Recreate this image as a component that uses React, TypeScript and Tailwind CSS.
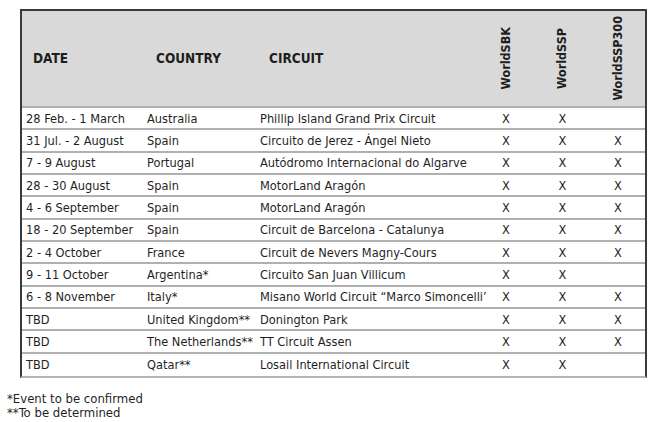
const rows: [string, string, string, boolean, boolean, boolean][] = [
  ['28 Feb. - 1 March', 'Australia', 'Phillip Island Grand Prix Circuit', true, true, false],
  ['31 Jul. - 2 August', 'Spain', 'Circuito de Jerez - Ángel Nieto', true, true, true],
  ['7 - 9 August', 'Portugal', 'Autódromo Internacional do Algarve', true, true, true],
  ['28 - 30 August', 'Spain', 'MotorLand Aragón', true, true, true],
  ['4 - 6 September', 'Spain', 'MotorLand Aragón', true, true, true],
  ['18 - 20 September', 'Spain', 'Circuit de Barcelona - Catalunya', true, true, true],
  ['2 - 4 October', 'France', 'Circuit de Nevers Magny-Cours', true, true, true],
  ['9 - 11 October', 'Argentina*', 'Circuito San Juan Villicum', true, true, false],
  ['6 - 8 November', 'Italy*', 'Misano World Circuit “Marco Simoncelli’', true, true, true],
  ['TBD', 'United Kingdom**', 'Donington Park', true, true, true],
  ['TBD', 'The Netherlands**', 'TT Circuit Assen', true, true, true],
  ['TBD', 'Qatar**', 'Losail International Circuit', true, true, false],
];

const cols = 'grid grid-cols-[121px_113px_222px_56px_57px_54px]';

function VHead({ label }: { label: string }) {
  return (
    <div className="flex items-center justify-center">
      <span className="[writing-mode:vertical-rl] rotate-180 text-[12.5px] font-bold text-[#1e1e1e]">{label}</span>
    </div>
  );
}

export default function App() {
  return (
    <div className="w-[649px] h-[422px] bg-white text-[#1f1f1f] font-['DejaVu_Sans_Condensed','DejaVu_Sans',sans-serif] overflow-hidden">
      <div className="ml-[20px] mt-[9px] w-[627px] border-t-2 border-l-2 border-r-2 border-[#3a3a3a] border-b-2 border-b-[#b4b4b4]">
        <div className={`${cols} h-[97px] bg-[#d9d9d9] border-b-2 border-[#b0b0b0] text-[13.5px] font-bold text-[#1e1e1e]`}>
          <div className="flex items-center pl-[11px]">DATE</div>
          <div className="flex items-center pl-[13px]">COUNTRY</div>
          <div className="flex items-center pl-[13px]">CIRCUIT</div>
          <VHead label="WorldSBK" />
          <VHead label="WorldSSP" />
          <VHead label="WorldSSP300" />
        </div>
        {rows.map((r, i) => (
          <div
            key={i}
            className={`${cols} h-[22.33px] text-[12.7px] ${i < rows.length - 1 ? 'border-b-2 border-[#b0b0b0]' : ''}`}
          >
            <div className="flex items-center pl-[4px] whitespace-nowrap">{r[0]}</div>
            <div className="flex items-center pl-[4px] whitespace-nowrap">{r[1]}</div>
            <div className="flex items-center pl-[4px] whitespace-nowrap">{r[2]}</div>
            <div className="flex items-center justify-center">{r[3] ? 'X' : ''}</div>
            <div className="flex items-center justify-center">{r[4] ? 'X' : ''}</div>
            <div className="flex items-center justify-center">{r[5] ? 'X' : ''}</div>
          </div>
        ))}
      </div>
      <div className="mt-[14px] ml-[7px] text-[13px] leading-[14px]">
        <div>*Event to be confirmed</div>
        <div>**To be determined</div>
      </div>
    </div>
  );
}
